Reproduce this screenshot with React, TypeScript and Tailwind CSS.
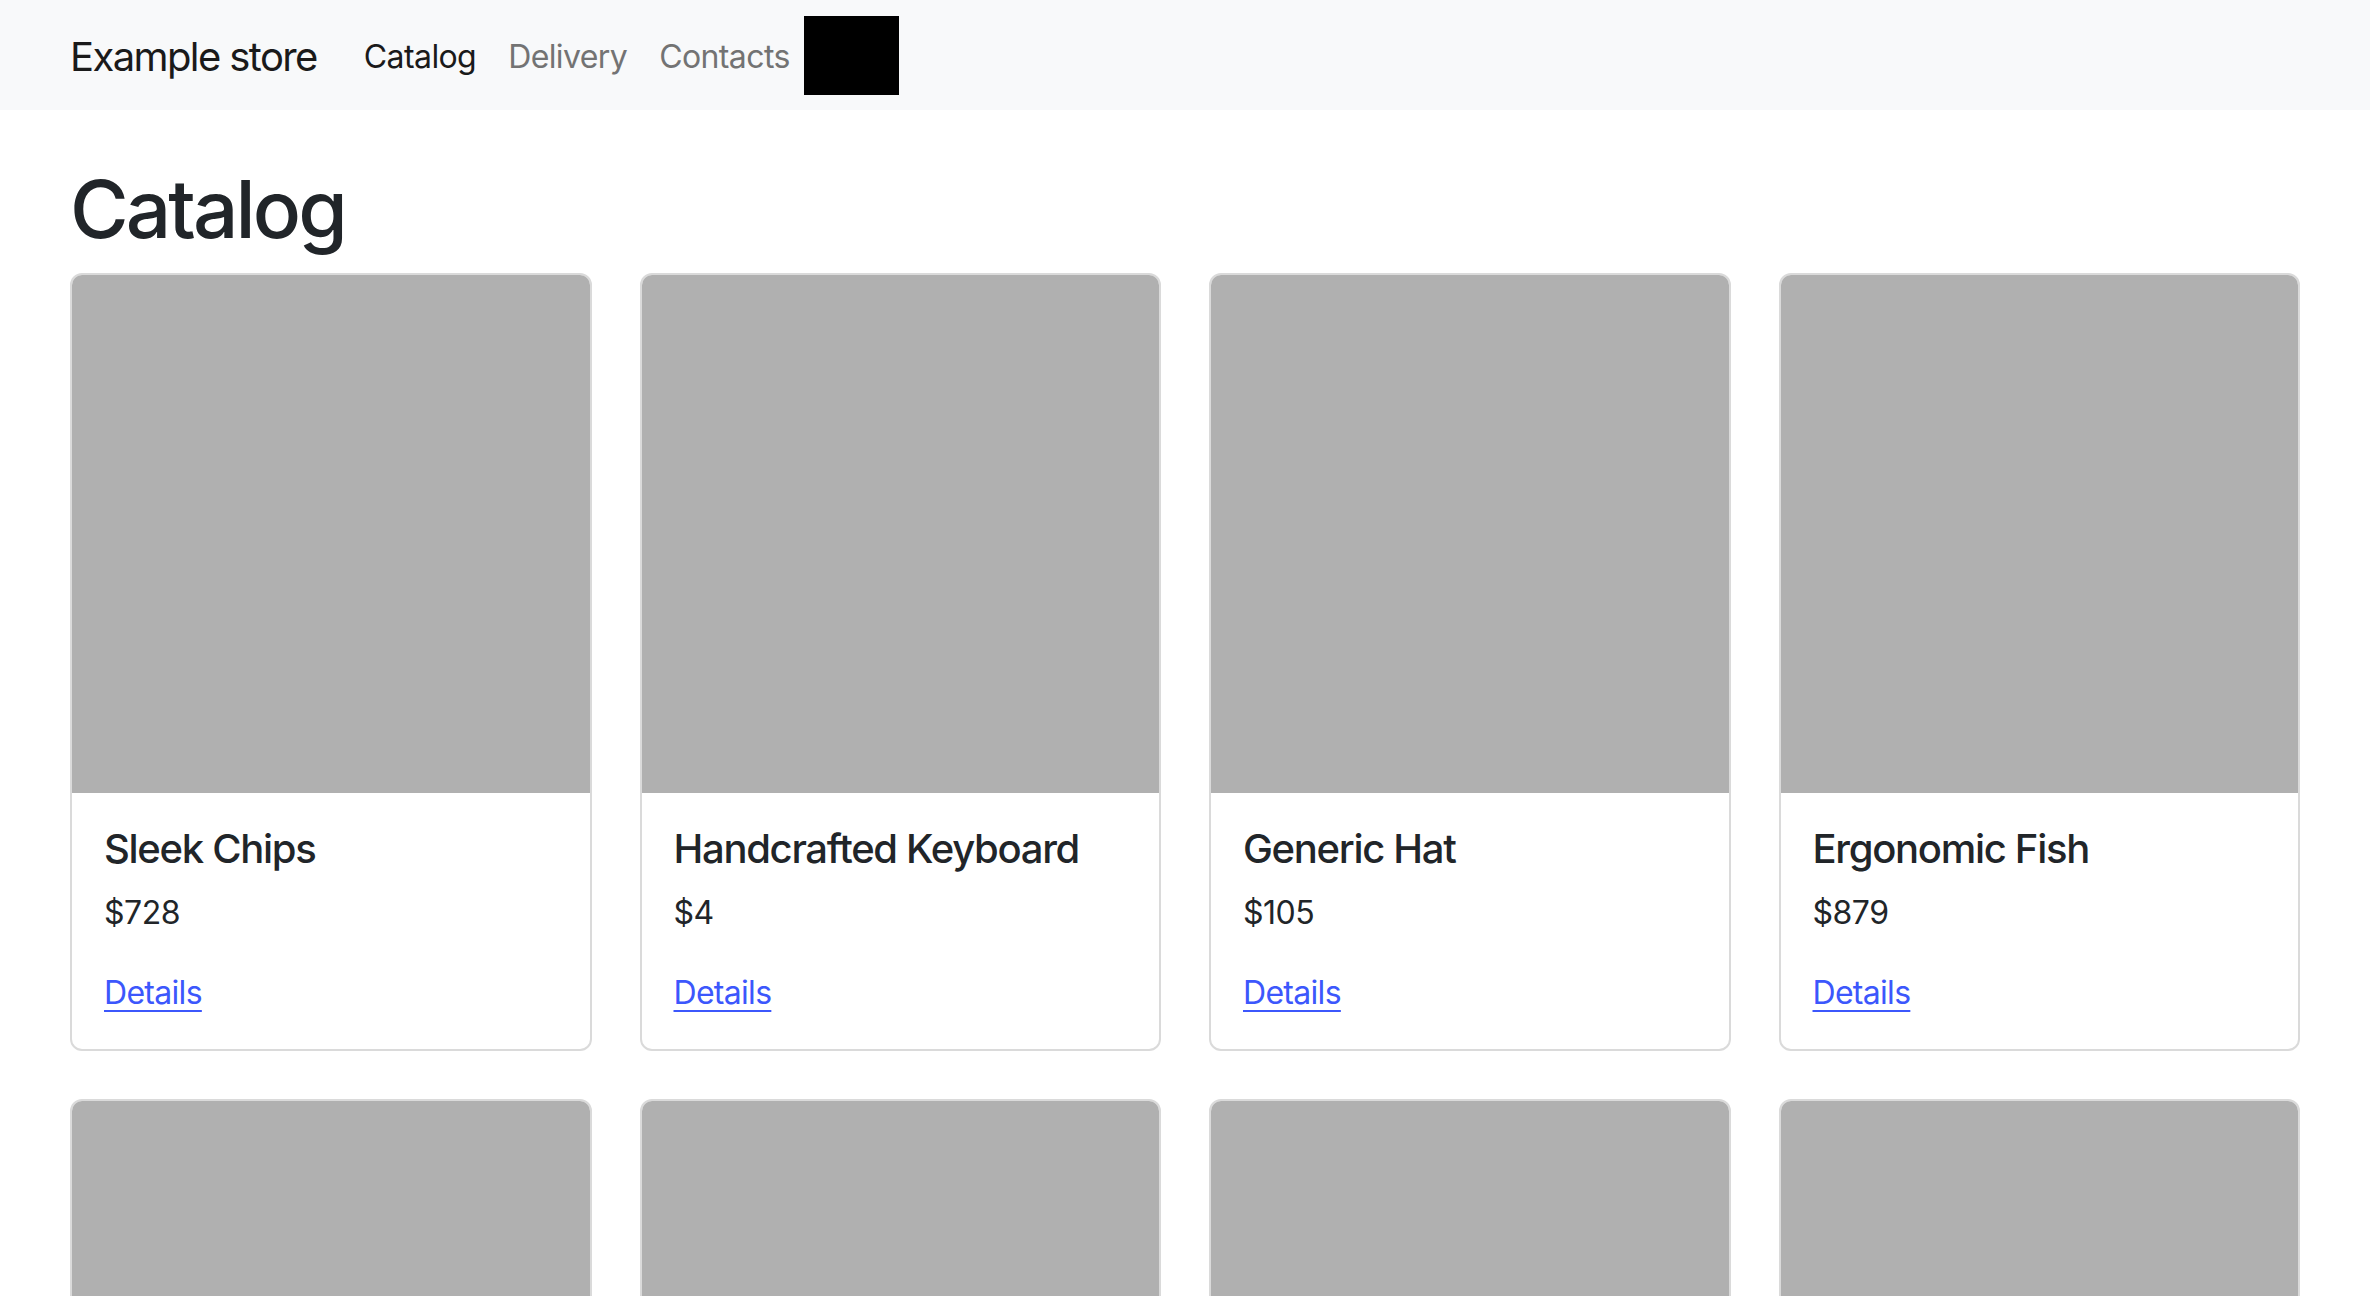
const products = [
  { name: 'Sleek Chips', price: 728 },
  { name: 'Handcrafted Keyboard', price: 4 },
  { name: 'Generic Hat', price: 105 },
  { name: 'Ergonomic Fish', price: 879 },
  { name: 'Rustic Towels', price: 312 },
  { name: 'Small Gloves', price: 56 },
  { name: 'Tasty Cheese', price: 240 },
  { name: 'Licensed Shoes', price: 661 },
]

function ProductCard({ name, price }: { name: string; price: number }) {
  return (
    <div className="border-2 border-[#dadada] rounded-[12px] overflow-hidden bg-white">
      {/* Image placeholder */}
      <div className="aspect-square bg-[#b0b0b0]" />
      <div className="p-8">
        <h5 className="text-[40px] leading-[48px] font-medium text-[#212529] tracking-[-1.3px] mb-4">{name}</h5>
        <p className="text-[32px] leading-[48px] text-[#212529] tracking-[-0.5px] mb-8">${price}</p>
        <a href="#" className="text-[32px] leading-[48px] text-[#3c57fc] tracking-[-0.7px] underline underline-offset-[6px] decoration-2">
          Details
        </a>
      </div>
    </div>
  )
}

export default function App() {
  return (
    <div className="min-h-screen bg-white" style={{ fontFamily: 'Inter, "Noto Sans", sans-serif' }}>
      {/* Navbar */}
      <nav className="h-[110px] bg-[#f8f9fa]">
        <div className="w-[2230px] mx-auto h-full flex items-center">
          <a href="#" className="text-[40px] text-[#1a1a1a] tracking-[-1.6px] mr-[47px] mt-[4px]">Example store</a>
          <div className="flex items-center">
            <a href="#" className="text-[32px] text-[#1a1a1a] tracking-[-0.6px] mt-[4px]">Catalog</a>
            <a href="#" className="text-[32px] text-[#737373] tracking-[-0.6px] ml-[32px] mt-[4px]">Delivery</a>
            <a href="#" className="text-[32px] text-[#737373] tracking-[-0.6px] ml-[32px] mt-[4px]">Contacts</a>
            <div className="w-[95px] h-[79px] bg-black ml-[14px]" />
          </div>
        </div>
      </nav>

      <main className="w-[2230px] mx-auto pt-[51px]">
        <h1 className="text-[80px] leading-[96px] font-medium text-[#212529] tracking-[-2.9px] mb-4">Catalog</h1>
        <div className="grid grid-cols-4 gap-x-12 gap-y-12">
          {products.map((p) => (
            <ProductCard key={p.name} name={p.name} price={p.price} />
          ))}
        </div>
      </main>
    </div>
  )
}
